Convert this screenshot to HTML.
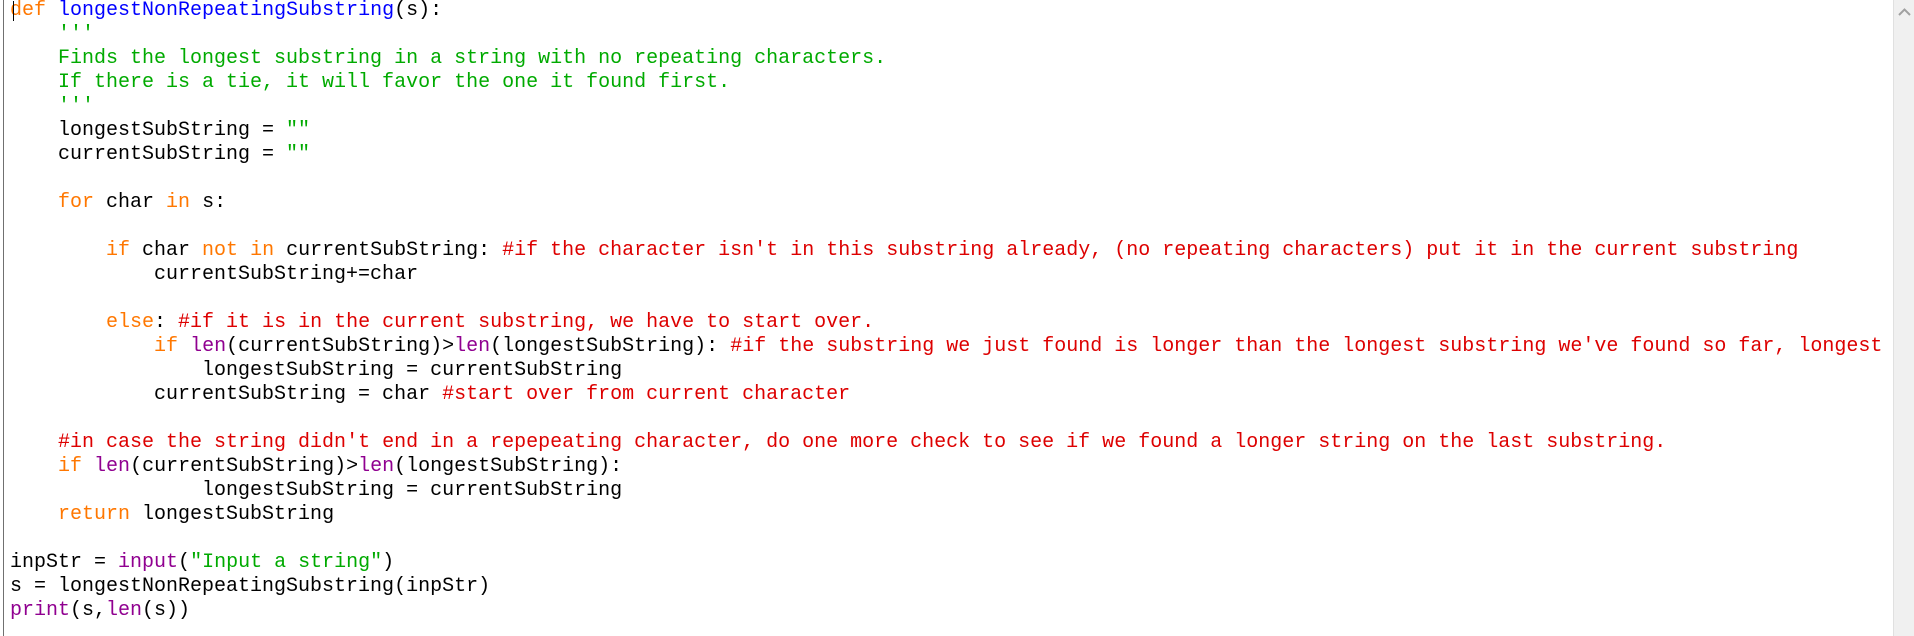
<!DOCTYPE html>
<html><head><meta charset="utf-8"><style>
html,body{margin:0;padding:0;background:#fff;width:1914px;height:636px;overflow:hidden}
#ed{position:absolute;left:3px;top:0;width:1889px;height:636px;border-left:1px solid #707070;overflow:hidden}
pre{margin:0;padding:0 0 0 6px;position:absolute;top:-1px;left:0;font-family:"Liberation Mono",monospace;font-size:20px;line-height:24px;color:#000;white-space:pre}
.k{color:#ff7700}.d{color:#0000ff}.s{color:#00aa00}.c{color:#dd0000}.b{color:#900090}
#cur{position:absolute;left:9px;top:1px;width:1px;height:20px;background:#000}
#sb{position:absolute;left:1893px;top:0;width:21px;height:636px;background:#f0f0f0;border-left:1px solid #e0e0e0}
</style></head><body>
<div id="ed"><pre><span class="k">def</span> <span class="d">longestNonRepeatingSubstring</span>(s):
    <span class="s">'''
    Finds the longest substring in a string with no repeating characters.
    If there is a tie, it will favor the one it found first.
    '''</span>
    longestSubString = <span class="s">""</span>
    currentSubString = <span class="s">""</span>

    <span class="k">for</span> char <span class="k">in</span> s:

        <span class="k">if</span> char <span class="k">not</span> <span class="k">in</span> currentSubString: <span class="c">#if the character isn't in this substring already, (no repeating characters) put it in the current substring</span>
            currentSubString+=char

        <span class="k">else</span>: <span class="c">#if it is in the current substring, we have to start over.</span>
            <span class="k">if</span> <span class="b">len</span>(currentSubString)&gt;<span class="b">len</span>(longestSubString): <span class="c">#if the substring we just found is longer than the longest substring we've found so far, longest substring</span>
                longestSubString = currentSubString
            currentSubString = char <span class="c">#start over from current character</span>

    <span class="c">#in case the string didn't end in a repepeating character, do one more check to see if we found a longer string on the last substring.</span>
    <span class="k">if</span> <span class="b">len</span>(currentSubString)&gt;<span class="b">len</span>(longestSubString):
                longestSubString = currentSubString
    <span class="k">return</span> longestSubString

inpStr = <span class="b">input</span>(<span class="s">"Input a string"</span>)
s = longestNonRepeatingSubstring(inpStr)
<span class="b">print</span>(s,<span class="b">len</span>(s))</pre><div id="cur"></div></div>
<div id="sb"><svg width="21" height="20" style="position:absolute;top:2px;left:0"><path d="M5 13 L10.5 7.5 L16 13" fill="none" stroke="#a0a0a0" stroke-width="2"/></svg></div>
</body></html>
